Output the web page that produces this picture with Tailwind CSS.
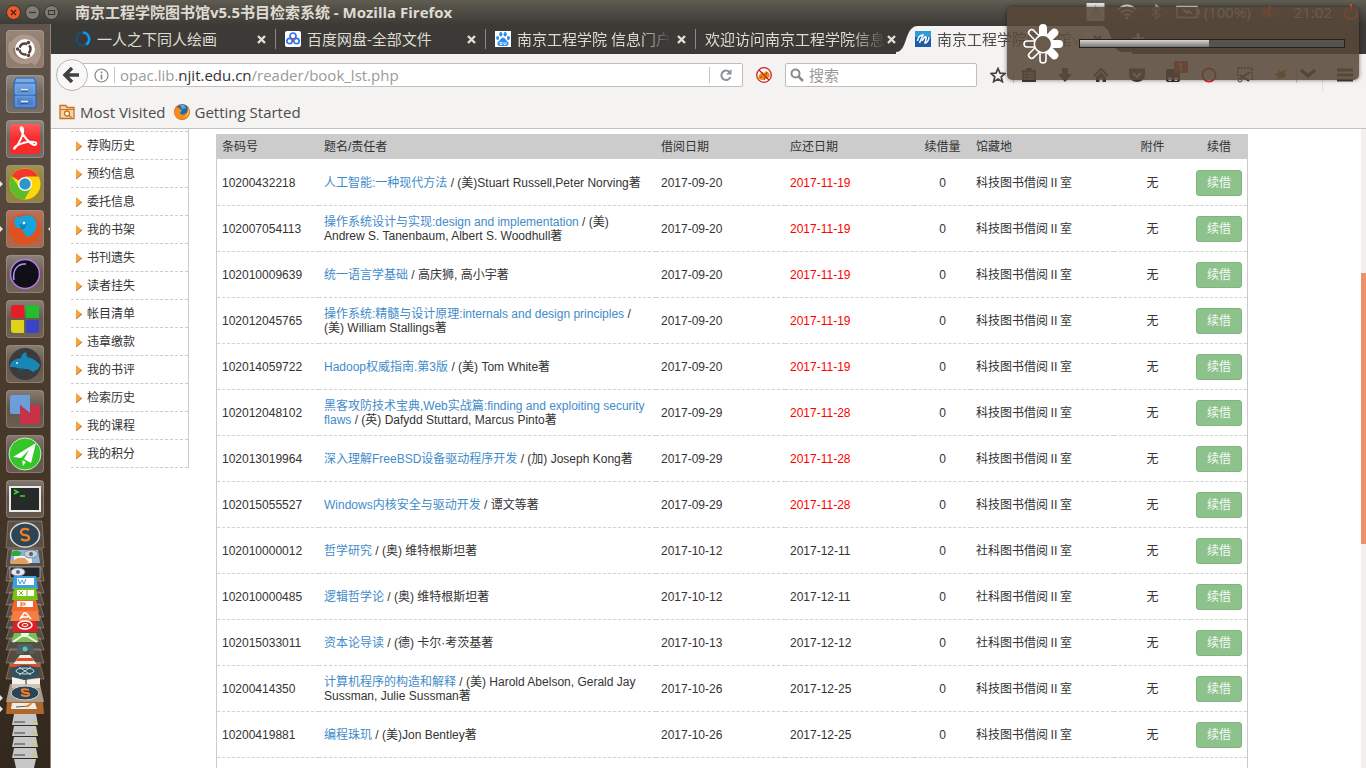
<!DOCTYPE html>
<html lang="zh-CN">
<head>
<meta charset="utf-8">
<title>南京工程学院图书馆v5.5书目检索系统</title>
<script src="https://cdn.jsdelivr.net/npm/@tailwindcss/browser@4"></script>
</head>
<body class="relative flex h-screen flex-col overflow-hidden bg-white font-['Open_Sans','Noto_Sans_CJK_SC',sans-serif] text-[15px] text-[#4c4c4c]">

<!-- Desktop panel -->
<header class="flex h-6 shrink-0 items-center bg-linear-to-b from-[#5f5c51] to-[#3c3b37] pl-[6px] pr-2">
  <div class="flex gap-1">
    <button aria-label="关闭" class="size-[15px]"><svg viewBox="0 0 15 15"><circle cx="7.500" cy="7.500" r="7" fill="#ee5a2c" stroke="#35332e"/><path d="M5 5l5 5M10 5l-5 5" stroke="#4a2413" stroke-width="1.300"/></svg></button>
    <button aria-label="最小化" class="size-[15px]"><svg viewBox="0 0 15 15"><circle cx="7.500" cy="7.500" r="7" fill="#7f7c74" stroke="#35332e"/><path d="M4 7.500h7" stroke="#3b3934" stroke-width="1.300"/></svg></button>
    <button aria-label="最大化" class="size-[15px]"><svg viewBox="0 0 15 15"><circle cx="7.500" cy="7.500" r="7" fill="#7f7c74" stroke="#35332e"/><path d="M4.500 5.500h6v4h-6z" fill="none" stroke="#3b3934" stroke-width="1.200"/></svg></button>
  </div>
  <h1 class="ml-4 font-['Open_Sans','Noto_Sans_CJK_SC',sans-serif] font-bold whitespace-nowrap text-[#dfdbd2]">南京工程学院图书馆v5.5书目检索系统 - Mozilla Firefox</h1>
  <div class="ml-auto flex items-center text-[#dfdbd2]">
    <svg class="w-[19px]" viewBox="0 0 19 18"><path d="M.5 0h18v18H.500z" fill="#e9e9e9"/><path d="M5 14l4.500-10L14 14M7 10.500h5" stroke="#b5b5b5" stroke-width="2" fill="none"/></svg>
    <svg class="ml-3 w-5" viewBox="0 0 20 16"><path d="M1 5.500q9-8 18 0M4 8.500q6-5 12 0M7 11.500q3-2.500 6 0" stroke="#dfdbd2" stroke-width="2" fill="none"/><circle cx="10" cy="14" r="1.500" fill="#dfdbd2"/></svg>
    <svg class="ml-[14px] w-[10px]" viewBox="0 0 10 16"><path d="M1 4.500l8 7-4 3.500V1l4 3.500-8 7" stroke="#b5b1a8" stroke-width="1.400" fill="none"/></svg>
    <svg class="ml-[15px] w-6" viewBox="0 0 24 14"><path d="M1 1.500h20v11H1zM21 5h2v4h-2" stroke="#dfdbd2" stroke-width="1.500" fill="none"/><path d="M5 3l7 3v-2l6 6-7-2.500V10z" fill="#dfdbd2"/></svg>
    <span class="ml-1">(100%)</span>
    <svg class="ml-3 w-[19px]" viewBox="0 0 19 14"><path d="M0 4h3l5-4v14L3 10H0z" fill="#e8442e"/><path d="M10 7h9" stroke="#e8442e" stroke-dasharray="2 1"/></svg>
    <span class="ml-3">21:02</span>
    <svg class="ml-3 w-[14px]" viewBox="0 0 14 16"><path d="M4 4a6 6 0 1 0 6 0M7 0v8" stroke="#ff4a1a" stroke-width="2" fill="none"/></svg>
  </div>
</header>

<div class="flex min-h-0 flex-1">
  <!-- Application launcher -->
  <aside class="flex w-[51px] shrink-0 flex-col items-center overflow-hidden border-r border-[#8c837b] bg-linear-to-b from-[#60544b] via-[#4a3a2b] to-[#33281e] pt-[6px]">
    <svg class="w-[51px] shrink-0" height="488" viewBox="0 0 51 488">
      <defs>
        <linearGradient id="tile" x1="0" y1="0" x2="0" y2="1"><stop offset="0" stop-color="#fff" stop-opacity=".33"/><stop offset=".5" stop-color="#fff" stop-opacity=".14"/><stop offset="1" stop-color="#fff" stop-opacity=".19"/></linearGradient>
        <linearGradient id="cab" x1="0" y1="0" x2="0" y2="1"><stop offset="0" stop-color="#7db0ea"/><stop offset="1" stop-color="#3e75c4"/></linearGradient>
        <linearGradient id="red" x1="0" y1="0" x2="0" y2="1"><stop offset="0" stop-color="#ff5a5a"/><stop offset=".5" stop-color="#f92a2c"/></linearGradient>
        <g id="t"><rect x="6.500" y=".5" width="37" height="37" rx="3" fill="url(#tile)" stroke="#fff" stroke-opacity=".28"/></g>
      </defs>
      <use href="#t"/><rect x="7" y="1" width="36" height="36" rx="3" fill="#a08471" opacity=".6"/>
      <path d="M13 18c0-9 9-14 19-9 8 5 9 17 1 25M37 18c-1 11-9 16-18 13-8-4-10-11-7-19" fill="none" stroke="#cbb9ab" stroke-width="5" opacity=".45"/>
      <circle cx="25" cy="19" r="10" fill="#fff"/><circle cx="25" cy="19" r="5.500" fill="none" stroke="#55423a" stroke-width="2.500" stroke-dasharray="9.500 2" stroke-dashoffset="4.700"/><circle cx="17.500" cy="19" r="1.700" fill="#55423a"/><circle cx="28.500" cy="12.500" r="1.700" fill="#55423a"/><circle cx="28.500" cy="25.500" r="1.700" fill="#55423a"/>
      <g transform="translate(0 45)"><use href="#t"/><path d="M16 3h18l2 5v25H14V8z" fill="url(#cab)" stroke="#2c61aa"/><path d="M14 8h22M14 20h22" stroke="#2c61aa"/><path d="M16 10h18v9H16zM16 22h18v9H16z" fill="none" stroke="#86b4ee" stroke-width=".6"/><path d="M21 15h7M21 27h7" stroke="#26528d" stroke-width="3.500"/><path d="M21 14.500h7M21 26.500h7" stroke="#dce6f1" stroke-width="2"/></g>
      <g transform="translate(0 90)"><use href="#t"/><rect x="10" y="4" width="30" height="30" rx="3" fill="url(#red)"/><path d="M15 28C19 24 24 14 23 9c-1-3-3-2-2 1 2 6 8 13 13 15 3 0 3-3 0-3-6-1-12 1-18 4-3 2-2 4-1 2z" fill="none" stroke="#fff" stroke-width="2"/></g>
      <g transform="translate(0 135)"><use href="#t"/><rect x="7" y="1" width="36" height="36" rx="3" fill="#b39b22" opacity=".55"/><circle cx="25" cy="19" r="15.500" fill="#fdd509"/><path d="M25 19L11.600 11.200A15.500 15.500 0 0 1 38.400 11.500H25z" fill="#f2372f"/><path d="M11.600 11.200A15.500 15.500 0 0 0 24.500 34.500L31 23l-12-1z" fill="#5bbd2c"/><circle cx="25" cy="19" r="7" fill="#fff"/><circle cx="25" cy="19" r="5.700" fill="#3194c6"/></g>
      <g transform="translate(0 180)"><use href="#t"/><rect x="7" y="1" width="36" height="36" rx="3" fill="#d9663f" opacity=".65"/><circle cx="25" cy="19" r="15.500" fill="#e0511f"/><path d="M14 13c0-3 1-5 3-7l2 2c4-3 9-4 13-2 5 3 6 10 3 15-3 5-7 7-11 5l3-2c-3 0-5-2-4-5l-5-1c-2 0-4-3-4-5z" fill="#16a4dc"/><path d="M19 14l5 1 3-2-2 5-3 2z" fill="#0787bb"/><circle cx="24" cy="13" r="1.300" fill="#fff"/><path d="M0 16l3 3-3 3zM51 16l-3 3 3 3z" fill="#e8e3dd"/></g>
      <path d="M0 151l3 3-3 3z" fill="#e8e3dd"/>
      <g transform="translate(0 225)"><use href="#t"/><circle cx="25" cy="19" r="14.500" fill="#100e16" stroke="#b679e9" stroke-width="1.500"/><path d="M14 25C12 15 18 8 26 9" fill="none" stroke="#a6a0ee" stroke-width="1.500"/></g>
      <g transform="translate(0 270)"><use href="#t"/><path d="M11 8a3 3 0 0 1 3-3h10v13H11z" fill="#e51d25"/><path d="M26 5h10a3 3 0 0 1 3 3v10H26z" fill="#25bd30"/><path d="M11 20h13v13H14a3 3 0 0 1-3-3z" fill="#ded21f"/><path d="M26 20h13v10a3 3 0 0 1-3 3H26z" fill="#3d43c7"/></g>
      <g transform="translate(0 315)"><use href="#t"/><circle cx="25" cy="19" r="16" fill="#3b3c3d"/><path d="M10 20c2-5 6-6 11-7 0-3 2-5 5-6l1 5c6 1 11 5 13 8l-2 4-5 3c-3-2-4-3-6-3-7 0-10-1-13-2l-4 0z" fill="#1687b7"/><path d="M20 23l-1 4 5-3z" fill="#075d87"/><circle cx="17" cy="18" r="1" fill="#e7f7ff"/></g>
      <g transform="translate(0 360)"><use href="#t"/><path d="M12 5h18v18l-10-8v9h-8a2 2 0 0 1-2-2V7a2 2 0 0 1 2-2z" fill="#6d9edb"/><path d="M20 15l10 9v-9h8a2 2 0 0 1 2 2v15a2 2 0 0 1-2 2H22a2 2 0 0 1-2-2z" fill="#ca3047"/></g>
      <g transform="translate(0 405)"><use href="#t"/><circle cx="25" cy="19" r="16" fill="#34c629" stroke="#c9f1bf"/><path d="M13 22L36 8l-5 20-7-4 5-9-8 8z" fill="#fff"/><path d="M22 25l4 2-3 4z" fill="#e5f7e2"/></g>
      <g transform="translate(0 450)"><use href="#t"/><rect x="10" y="7" width="30" height="24" fill="#262a29" stroke="#ecebe9" stroke-width="2"/><path d="M14 10l4 2-4 2M20 16h5" stroke="#2ce52c" stroke-width="1.500" fill="none"/></g>
    </svg>
    <!-- Folded launcher items -->
    <svg class="w-[51px] shrink-0" height="250" viewBox="0 518 51 250">
      <g fill="#a39a92" fill-opacity=".28" stroke="#cfc8c0" stroke-opacity=".35"><path d="M8 521h34l2 27H6zM8 549h34l2 18H6zM8 568h34l2 13H6zM10 580h30l4 13H6zM10 592h30l4 13H6zM10 604h30l4 13H6zM10 616h30l4 12H6zM10 627h30l4 12H6zM10 638h30l4 12H6zM10 649h30l4 14H6zM10 663h30l4 16H6z"/></g>
      <ellipse cx="25" cy="535" rx="14.500" ry="12" fill="#2d4552" stroke="#d8dcde" stroke-width="1.500"/><path d="M29 530c-6-3-10 1-7 4 2 2 7 0 7 4 0 3-5 3-8 1" fill="none" stroke="#f07f28" stroke-width="2.300"/>
      <path d="M12 550h26l2 13H10z" fill="#8ab6e3"/><path d="M14 556h18v7H14z" fill="#eef1f2"/><path d="M10 562l8-4h7l5 6H11z" fill="#e0a25b"/><path d="M11 553q5-5 11 0l-3 3h-7z" fill="#36a831"/><ellipse cx="31" cy="554" rx="7" ry="4" fill="#c5ced3" stroke="#7d8c96"/><circle cx="31" cy="554" r="2" fill="#52626d"/>
      <path d="M10 567h30v11H10z" fill="#26272b" stroke="#c7c7c7" stroke-width=".7"/><ellipse cx="18" cy="572" rx="7" ry="4" fill="#e5e8ec" stroke="#7987a2"/><circle cx="18" cy="572" r="2" fill="#667"/>
      <path d="M14 576h22l2 13H12z" fill="#3b9fe2"/><path d="M17 578h17v7H17z" fill="#fff"/><path d="M18 579l2 5 2-4 2 4 2-5" fill="none" stroke="#3b9fe2"/>
      <path d="M14 588h22l2 12H12z" fill="#78c40f"/><path d="M17 590h17v6H17z" fill="#fff"/><path d="M19 591l4 4m0-4l-4 4M27 590v6" stroke="#78c40f"/>
      <path d="M14 600h22l3 12H11z" fill="#f4652a"/><path d="M17 601h16v6H17z" fill="#fff"/><path d="M21 602v5m0-4h4v2h-4" stroke="#f4652a" fill="none"/>
      <path d="M13 611h25l2 10H10z" fill="#f47d45"/><path d="M20 619l4-6h2l5 6M22 617h6" stroke="#fff" stroke-width="1.500" fill="none"/>
      <path d="M14 621h22l2 11H12z" fill="#da2027"/><ellipse cx="25" cy="625" rx="7" ry="4" fill="none" stroke="#fff" stroke-width="1.500"/><ellipse cx="25" cy="625" rx="3" ry="1.500" fill="none" stroke="#fff"/>
      <path d="M14 633h22l3 9H11z" fill="#7abd52"/><path d="M13 642l9-6h5l10 6M21 634h8" stroke="#edf7e7" stroke-width="2" fill="none"/>
      <path d="M18 644h14l3 10h-5l-3-6-4 6h-7z" fill="#526064"/><circle cx="25" cy="649" r="2.500" fill="#59c2bd"/>
      <path d="M20 655h10l8 11H12z" fill="#f0ede7"/><path d="M18 658h14l2 3H16zM10 664h30v3H10z" fill="#dd4f27"/>
      <ellipse cx="25" cy="672" rx="14" ry="7" fill="#2e5264"/><ellipse cx="25" cy="671" rx="9" ry="3" fill="none" stroke="#cbd7d7"/><path d="M19 667l12 8m0-8l-12 8" stroke="#cbd7d7"/>
      <path d="M12 677l12 3 16-2v10H12z" fill="#f2f1ec"/><path d="M26 679v6" stroke="#222"/>
      <path d="M10 684h30l4 18H6z" fill="#c5b7aa" fill-opacity=".8"/><ellipse cx="25" cy="693" rx="14" ry="7" fill="#294455" stroke="#d6d8d8"/><path d="M29 690c-6-2-9 0-6 2 2 2 7 0 6 3-2 2-5 1-8 0" fill="none" stroke="#f07f28" stroke-width="2"/>
      <path d="M7 702h36l1 12H6z" fill="#af672e"/><path d="M12 703h23l2 6H11z" fill="#eeeee9"/><path d="M16 707l13-1 3-3" stroke="#5c5b58" fill="none"/><path d="M26 707l6-4" stroke="#e98e36" stroke-width="2"/>
      <g fill="#c6c7c6"><path d="M14 714h22l2 11H12zM14 726h22l2 10H12zM14 737h22l2 10H12zM14 748h22l2 10H12zM14 759h22l-2 9H16z"/></g>
      <path d="M14 722h11M14 733h11M14 744h11M14 755h11" stroke="#3f4040"/><path d="M32 722h5M32 733h5M32 744h5M32 755h5" stroke="#c3d222"/>
      <path d="M0 695l3 3-3 3zM0 706l3 3-3 3z" fill="#e8e3dd"/>
    </svg>
  </aside>

  <div class="flex min-w-0 flex-1 flex-col">
    <!-- Tab strip -->
    <nav class="flex h-[30px] shrink-0 bg-[#3b3a36] pl-[15px] text-[15px] leading-[30px] text-[#dfdbd2]" aria-label="标签页">
      <div class="my-[5px] flex w-[210px] items-center border-r border-[#8b8982] pr-[9px] pl-[9px]">
        <svg class="size-4 shrink-0" viewBox="0 0 16 16"><circle cx="8" cy="8" r="6.500" fill="none" stroke="#17507b" stroke-width="2"/><path d="M8 1.500a6.500 6.500 0 0 1 3 12" fill="none" stroke="#1497f5" stroke-width="2.500"/></svg>
        <a href="#" class="ml-[6px] flex-1 overflow-hidden whitespace-nowrap">一人之下同人绘画</a>
        <button aria-label="关闭标签页" class="size-[9px]"><svg viewBox="0 0 9 9"><path d="M1 1l7 7M8 1L1 8" stroke="#e2dfd6" stroke-width="2.400"/></svg></button>
      </div>
      <div class="my-[5px] flex w-[210px] items-center border-r border-[#8b8982] pr-[9px] pl-[9px]">
        <svg class="size-4 shrink-0" viewBox="0 0 16 16"><rect width="16" height="16" rx="2" fill="#fff"/><circle cx="8" cy="5" r="3" fill="none" stroke="#2f74ef" stroke-width="1.700"/><circle cx="4.500" cy="10" r="2.700" fill="none" stroke="#2f74ef" stroke-width="1.700"/><circle cx="11.500" cy="10" r="2.700" fill="none" stroke="#2f74ef" stroke-width="1.700"/><circle cx="8" cy="8.500" r="1.300" fill="#e84040"/></svg>
        <a href="#" class="ml-[6px] flex-1 overflow-hidden whitespace-nowrap">百度网盘-全部文件</a>
        <button aria-label="关闭标签页" class="size-[9px]"><svg viewBox="0 0 9 9"><path d="M1 1l7 7M8 1L1 8" stroke="#e2dfd6" stroke-width="2.400"/></svg></button>
      </div>
      <div class="my-[5px] flex w-[210px] items-center border-r border-[#8b8982] pr-[9px] pl-[9px]">
        <svg class="size-4 shrink-0" viewBox="0 0 16 16"><path d="M0 0h16v16H0z" fill="#fff"/><g fill="#2f8bf0"><ellipse cx="5.800" cy="3.200" rx="1.600" ry="2.200"/><ellipse cx="10.200" cy="3.200" rx="1.600" ry="2.200"/><ellipse cx="2.600" cy="7" rx="1.500" ry="2"/><ellipse cx="13.400" cy="7" rx="1.500" ry="2"/><path d="M8 6.500c2 0 2.500 2.500 4.500 4 2 2 1 4.500-1.500 4.500H5c-2.500 0-3.500-2.500-1.500-4.500 2-1.500 2.500-4 4.500-4z"/></g><path d="M5 11.500h2v2H5zM9 11v2.500h2V11" fill="none" stroke="#fff" stroke-width=".8"/></svg>
        <a href="#" class="ml-[6px] w-[154px] overflow-hidden mask-r-from-80% whitespace-nowrap">南京工程学院 信息门户</a>
        <button aria-label="关闭标签页" class="ml-auto size-[9px]"><svg viewBox="0 0 9 9"><path d="M1 1l7 7M8 1L1 8" stroke="#e2dfd6" stroke-width="2.400"/></svg></button>
      </div>
      <div class="flex w-[210px] items-center pr-[10px] pl-[9px]">
        <a href="#" class="w-[181px] overflow-hidden mask-r-from-80% whitespace-nowrap">欢迎访问南京工程学院信息</a>
        <button aria-label="关闭标签页" class="ml-auto size-[9px]"><svg viewBox="0 0 9 9"><path d="M1 1l7 7M8 1L1 8" stroke="#e2dfd6" stroke-width="2.400"/></svg></button>
      </div>
      <div class="relative -ml-[10px] flex w-[236px] items-center pr-[30px] pl-[19px] text-[#4c4c4c]">
        <svg class="absolute inset-y-0 left-0 w-[236px]" viewBox="0 0 236 30"><path d="M0 30v-2C12 28 8 2 22 2h182c15 0 8 26 24 26h8v2z" fill="#f4f3f1"/></svg>
        <svg class="relative size-4 shrink-0" viewBox="0 0 16 16"><path d="M0 0h16v16H0z" fill="#1e5ca8"/><path d="M0 0h16v6H0z" fill="#2f9bd8"/><path d="M4.500 12L8 4C5 4 3 7 2.500 10M7 10c2-4 5-6 4-2l-1 4c2 0 4-3 4-6" fill="none" stroke="#fff" stroke-width="1.500"/></svg>
        <a href="#" class="relative ml-[6px] w-[152px] overflow-hidden mask-r-from-80% whitespace-nowrap">南京工程学院图书馆v5</a>
        <button aria-label="关闭标签页" class="relative ml-auto size-[9px]"><svg viewBox="0 0 9 9"><path d="M1 1l7 7M8 1L1 8" stroke="#4c4c4c" stroke-width="2.400"/></svg></button>
      </div>
      <button aria-label="新建标签页" class="w-3"><svg viewBox="0 0 12 12"><path d="M6 0v12M0 6h12" stroke="#dfdbd2" stroke-width="3"/></svg></button>
    </nav>

    <!-- Navigation toolbar -->
    <div class="flex h-[42px] shrink-0 items-center bg-[#f4f3f1] pr-[13px] pl-[5px]">
      <button aria-label="后退" class="z-10 size-8 shrink-0 rounded-full border border-[#b9b6b2] bg-[#f9f8f7]"><svg viewBox="0 0 30 30"><path d="M15 8l-7 7 7 7M9 15h13" stroke="#414141" stroke-width="3.500" fill="none"/></svg></button>
      <form class="-ml-[10px] flex h-6 min-w-0 flex-1 items-center rounded-r-xs border border-[#c2bfbb] bg-white pl-[15px]">
        <svg class="size-[15px] shrink-0" viewBox="0 0 15 15"><circle cx="7.500" cy="7.500" r="6.500" fill="none" stroke="#858585" stroke-width="1.200"/><path d="M7.500 6.500v5M7.500 3.500v1.700" stroke="#858585" stroke-width="1.600"/></svg>
        <div class="ml-[5px] h-4 border-l border-[#c5c5c5]"></div>
        <a href="#" class="ml-[5px] flex-1 text-[15px] leading-5 whitespace-nowrap text-[#9a9a9a]">opac.lib.<span class="text-[#333]">njit.edu.cn</span>/reader/book_lst.php</a>
        <div class="h-4 border-l border-[#c5c5c5]"></div>
        <button type="button" aria-label="刷新" class="mx-[10px] size-3"><svg viewBox="0 0 12 12"><path d="M9.500 3A4.700 4.700 0 1 0 10.500 8" fill="none" stroke="#8b9299" stroke-width="2"/><path d="M11.500 0v5.500H6z" fill="#8b9299"/></svg></button>
      </form>
      <button aria-label="插件" class="mx-[13px] size-4 shrink-0"><svg viewBox="0 0 16 16"><circle cx="8" cy="8" r="7.300" fill="#fff" stroke="#cb2027" stroke-width="1.300"/><path d="M3 8l3-3 2 1 2-2 3 2 1 3-3 3-5 1-4-1z" fill="#ed8b11"/><path d="M4 11l2-2m2 4l1-3m2-5l-1 3" stroke="#8f4d0a"/><path d="M3 3l10 10" stroke="#cb2027" stroke-width="1.300"/></svg></button>
      <label class="flex h-6 w-[192px] shrink-0 items-center rounded-xs border border-[#c2bfbb] bg-white pl-1">
        <svg class="size-[14px]" viewBox="0 0 14 14"><circle cx="5.500" cy="5.500" r="4" fill="none" stroke="#8a8a8a" stroke-width="2"/><path d="M8.500 8.500l4.500 4.500" stroke="#8a8a8a" stroke-width="2.500"/></svg>
        <input aria-label="搜索" placeholder="搜索" class="ml-[5px] h-5 w-36 text-[15px] outline-none placeholder:text-[#999]">
      </label>
      <div class="ml-[13px] flex shrink-0 items-center text-[#4c4c4c]">
        <button aria-label="收藏" class="w-4"><svg viewBox="0 0 16 16"><path d="M8 1.500l2 4.600 5 .4-3.800 3.300 1.200 4.900L8 12.100l-4.400 2.600 1.200-4.900L1 6.500l5-.4z" fill="none" stroke="#444" stroke-width="1.700"/></svg></button>
        <div class="ml-[7px] h-4 border-l border-[#c5c5c5]"></div>
        <button aria-label="书签" class="ml-[7px] w-4"><svg viewBox="0 0 16 16"><path d="M1 3h4V1h6v2h4v12H1z" fill="#444"/><path d="M3 6h2m1 0h7M3 9h2m1 0h7M3 12h2m1 0h7" stroke="#f4f3f1"/></svg></button>
        <button aria-label="下载" class="ml-5 w-4"><svg viewBox="0 0 16 16"><path d="M5 1h6v6h4l-7 8-7-8h4z" fill="#444"/></svg></button>
        <button aria-label="主页" class="ml-5 w-4"><svg viewBox="0 0 16 16"><path d="M1 9l7-7 7 7" fill="none" stroke="#444" stroke-width="2"/><path d="M3 10l5-5 5 5v5H9.500v-4h-3v4H3z" fill="#444"/></svg></button>
        <button aria-label="Pocket" class="ml-5 w-4"><svg viewBox="0 0 16 16"><path d="M0 1.500h16V8A8 7 0 0 1 0 8z" fill="#444"/><path d="M4 6l4 4 4-4" stroke="#f4f3f1" stroke-width="2" fill="none"/></svg></button>
        <button aria-label="脚本管理" class="relative ml-5 w-4"><svg viewBox="0 0 16 16"><rect x="1" y="2" width="14" height="13" rx="2" fill="#333"/><circle cx="5" cy="12" r="2" fill="#fff"/><circle cx="11" cy="12" r="2" fill="#fff"/></svg><span class="absolute -top-[6px] left-[9px] w-[14px] bg-[#e0402e] text-center text-[11px] leading-3 text-white">1</span></button>
        <button aria-label="拦截" class="ml-5 w-4"><svg viewBox="0 0 16 16"><circle cx="8" cy="8" r="6.500" fill="#fff" stroke="#e42430" stroke-width="2"/><path d="M5 4h6v7l-3 2-3-3z" fill="#eee"/></svg></button>
        <button aria-label="截图" class="ml-5 w-4"><svg viewBox="0 0 16 16"><path d="M1 1h14v13M1 1v8" stroke="#444" stroke-width="1.500" stroke-dasharray="2 1" fill="none"/><circle cx="3" cy="13" r="2" fill="none" stroke="#444"/><path d="M4 11l9-6M3 8l9 6" stroke="#444" stroke-width="2"/></svg></button>
        <button aria-label="调试" class="ml-5 w-4"><svg viewBox="0 0 16 16"><path d="M2 7l5-2 7-3-2 4 2 3-5 2-6 2 2-3z" fill="#ba7929"/><path d="M5 2l6 9" stroke="#443" stroke-width="1"/></svg></button>
        <div class="ml-[7px] h-4 border-l border-[#c5c5c5]"></div>
        <button aria-label="更多" class="ml-[3px] w-4"><svg viewBox="0 0 16 16"><path d="M1 3l7 6 7-6" fill="none" stroke="#444" stroke-width="3.500"/></svg></button>
        <div class="ml-[6px] h-8 border-l border-[#dfddda]"></div>
        <button aria-label="菜单" class="ml-[14px] w-4"><svg viewBox="0 0 16 16"><path d="M0 3h16M0 8h16M0 13h16" stroke="#444" stroke-width="2.800"/></svg></button>
      </div>
    </div>

    <!-- Bookmarks toolbar -->
    <nav class="flex h-[33px] shrink-0 items-center border-b border-[#c6c3bf] bg-[#f4f3f1] pl-2 text-[15px]" aria-label="书签栏">
      <a href="#" class="flex items-center"><svg class="mr-[5px] size-4" viewBox="0 0 16 16"><path d="M1 1.500h6l1 2h7v11H1z" fill="#f6d3ad" stroke="#c8711f" stroke-width="1.300"/><path d="M1 5.500h14" stroke="#c8711f"/><circle cx="8" cy="9.500" r="2.500" fill="#fff" stroke="#c8711f" stroke-width="1.300"/><path d="M10 11.500l2.500 2" stroke="#c8711f" stroke-width="1.500"/></svg>Most Visited</a>
      <a href="#" class="ml-2 flex items-center"><svg class="mr-[5px] size-4" viewBox="0 0 16 16"><circle cx="8" cy="8" r="8" fill="#e8641b"/><circle cx="8.500" cy="6.500" r="6" fill="#1c69b5"/><path d="M2 4c2-1 3 0 4 1l2 1-2 3c1 2 4 2 6 0 2 0 2-4 1-6 5 5 2 12-5 12C1 15-1 9 2 4z" fill="#f58d1e"/><path d="M14 4c2 4 0 9-4 10 3-2 4-5 4-10z" fill="#fcd33c"/><path d="M6 1l4 0 2 3-4 1z" fill="#47b2e8"/></svg>Getting Started</a>
    </nav>

    <!-- Library page -->
    <div class="flex min-h-0 flex-1 font-['Liberation_Sans','Noto_Sans_CJK_SC',sans-serif] text-[12px] leading-[14px] text-[#333]">
      <main class="flex min-w-0 flex-1 items-start overflow-hidden pr-[113px] pl-5">
        <ul id="menu" class="w-[118px] shrink-0 border-r border-[#ccc]"><li class="h-[3px] border-b border-dashed border-[#ccc]"></li></ul>
        <table class="mt-[5px] ml-[27px] w-full table-fixed border-separate border-spacing-0 border border-[#ccc]">
          <colgroup><col class="w-[102px]"><col><col class="w-[129px]"><col class="w-[129px]"><col class="w-[57px]"><col class="w-[143px]"><col class="w-[77px]"><col class="w-[56px]"></colgroup>
          <thead><tr class="h-[25px] bg-[#ccc] text-left *:border-b *:border-white *:px-[5px] *:font-normal *:whitespace-nowrap"><th>条码号</th><th>题名/责任者</th><th>借阅日期</th><th>应还日期</th><th class="text-center">续借量</th><th>馆藏地</th><th class="text-center">附件</th><th class="text-center">续借</th></tr></thead>
          <tbody id="books"></tbody>
        </table>
      </main>
      <div class="w-[5px] shrink-0 bg-[#f2f1ef]"><div class="mt-36 h-[271px] bg-[#f08f69]"></div></div>
    </div>
  </div>
</div>

<!-- Brightness notification -->
<div class="absolute top-[7px] right-[7px] z-20 flex h-[73px] w-[352px] items-center rounded-[5px] bg-[#574838]/87 pr-[14px] pl-4 shadow-[0_0_4px_rgba(0,0,0,0.5)]" role="status">
  <svg class="size-10" viewBox="0 0 40 40">
    <defs><rect id="ray" x="17" y="1" width="6" height="13" rx="3"/></defs>
    <g fill="none" stroke="#fff" stroke-width="1.600"><use href="#ray" transform="rotate(180 20 20)"/><use href="#ray" transform="rotate(225 20 20)"/><use href="#ray" transform="rotate(270 20 20)"/><use href="#ray" transform="rotate(315 20 20)"/></g>
    <g fill="#fff" stroke="#fff" stroke-width="2"><use href="#ray"/><use href="#ray" transform="rotate(45 20 20)"/><use href="#ray" transform="rotate(90 20 20)"/><use href="#ray" transform="rotate(135 20 20)"/></g>
    <circle cx="20" cy="20" r="8.700" fill="#685a4c" stroke="#fff" stroke-width="1.600"/>
  </svg>
  <div class="ml-4 h-[9px] flex-1 border border-[#25211d] bg-[#56524d]"><div class="h-full bg-linear-to-b from-[#d4d4d2] to-[#777774]" style="width:49%"></div></div>
</div>

<script>
const menu = ['荐购历史','预约信息','委托信息','我的书架','书刊遗失','读者挂失','帐目清单','违章缴款','我的书评','检索历史','我的课程','我的积分'];
document.getElementById('menu').insertAdjacentHTML('beforeend', menu.map(m =>
  `<li class="h-7 border-b border-dashed border-[#ccc]"><a href="#" class="flex h-full items-center pl-[5px]"><svg class="mr-[5px] h-[10px] w-[6px]" viewBox="0 0 6 10"><path d="M0 0l6 5-6 5z" fill="#f5a53c"/><path d="M0 10l6-5" stroke="#b5651d"/></svg>${m}</a></li>`).join(''));

const books = [
  ['10200432218','人工智能:一种现代方法','(美)Stuart Russell,Peter Norving著','2017-09-20','2017-11-19','科'],
  ['102007054113','操作系统设计与实现:design and implementation','(美) Andrew S. Tanenbaum, Albert S. Woodhull著','2017-09-20','2017-11-19','科'],
  ['102010009639','统一语言学基础','高庆狮, 高小宇著','2017-09-20','2017-11-19','科'],
  ['102012045765','操作系统:精髓与设计原理:internals and design principles','(美) William Stallings著','2017-09-20','2017-11-19','科'],
  ['102014059722','Hadoop权威指南.第3版','(美) Tom White著','2017-09-20','2017-11-19','科'],
  ['102012048102','黑客攻防技术宝典,Web实战篇:finding and exploiting security flaws','(英) Dafydd Stuttard, Marcus Pinto著','2017-09-29','2017-11-28','科'],
  ['102013019964','深入理解FreeBSD设备驱动程序开发','(加) Joseph Kong著','2017-09-29','2017-11-28','科'],
  ['102015055527','Windows内核安全与驱动开发','谭文等著','2017-09-29','2017-11-28','科'],
  ['102010000012','哲学研究','(奥) 维特根斯坦著','2017-10-12','2017-12-11','社'],
  ['102010000485','逻辑哲学论','(奥) 维特根斯坦著','2017-10-12','2017-12-11','社'],
  ['102015033011','资本论导读','(德) 卡尔·考茨基著','2017-10-13','2017-12-12','社'],
  ['10200414350','计算机程序的构造和解释','(美) Harold Abelson, Gerald Jay Sussman, Julie Sussman著','2017-10-26','2017-12-25','科'],
  ['10200419881','编程珠玑','(美)Jon Bentley著','2017-10-26','2017-12-25','科'],
  null
];
const renew = '<button class="block h-[26px] w-[46px] rounded-[3px] border border-[#7fb57f] bg-[#8dc28d] text-[12px] text-white/90">续借</button>';
document.getElementById('books').innerHTML = books.map(b => b
  ? `<tr class="h-[46px] *:border-b *:border-dashed *:border-[#d2d2d2] *:px-[5px]"><td>${b[0]}</td><td><a href="#" class="text-[#428bca]">${b[1]}</a> / ${b[2]}</td><td>${b[3]}</td><td class="${b[4] < '2017-12' ? 'text-[#f00]' : ''}">${b[4]}</td><td class="text-center">0</td><td>${b[5]}${b[5] === '科' ? '技' : '科'}图书借阅Ⅱ室</td><td class="text-center">无</td><td>${renew}</td></tr>`
  : `<tr class="h-[46px] *:px-[5px]"><td colspan="7"></td><td>${renew}</td></tr>`).join('');
</script>
</body>
</html>
